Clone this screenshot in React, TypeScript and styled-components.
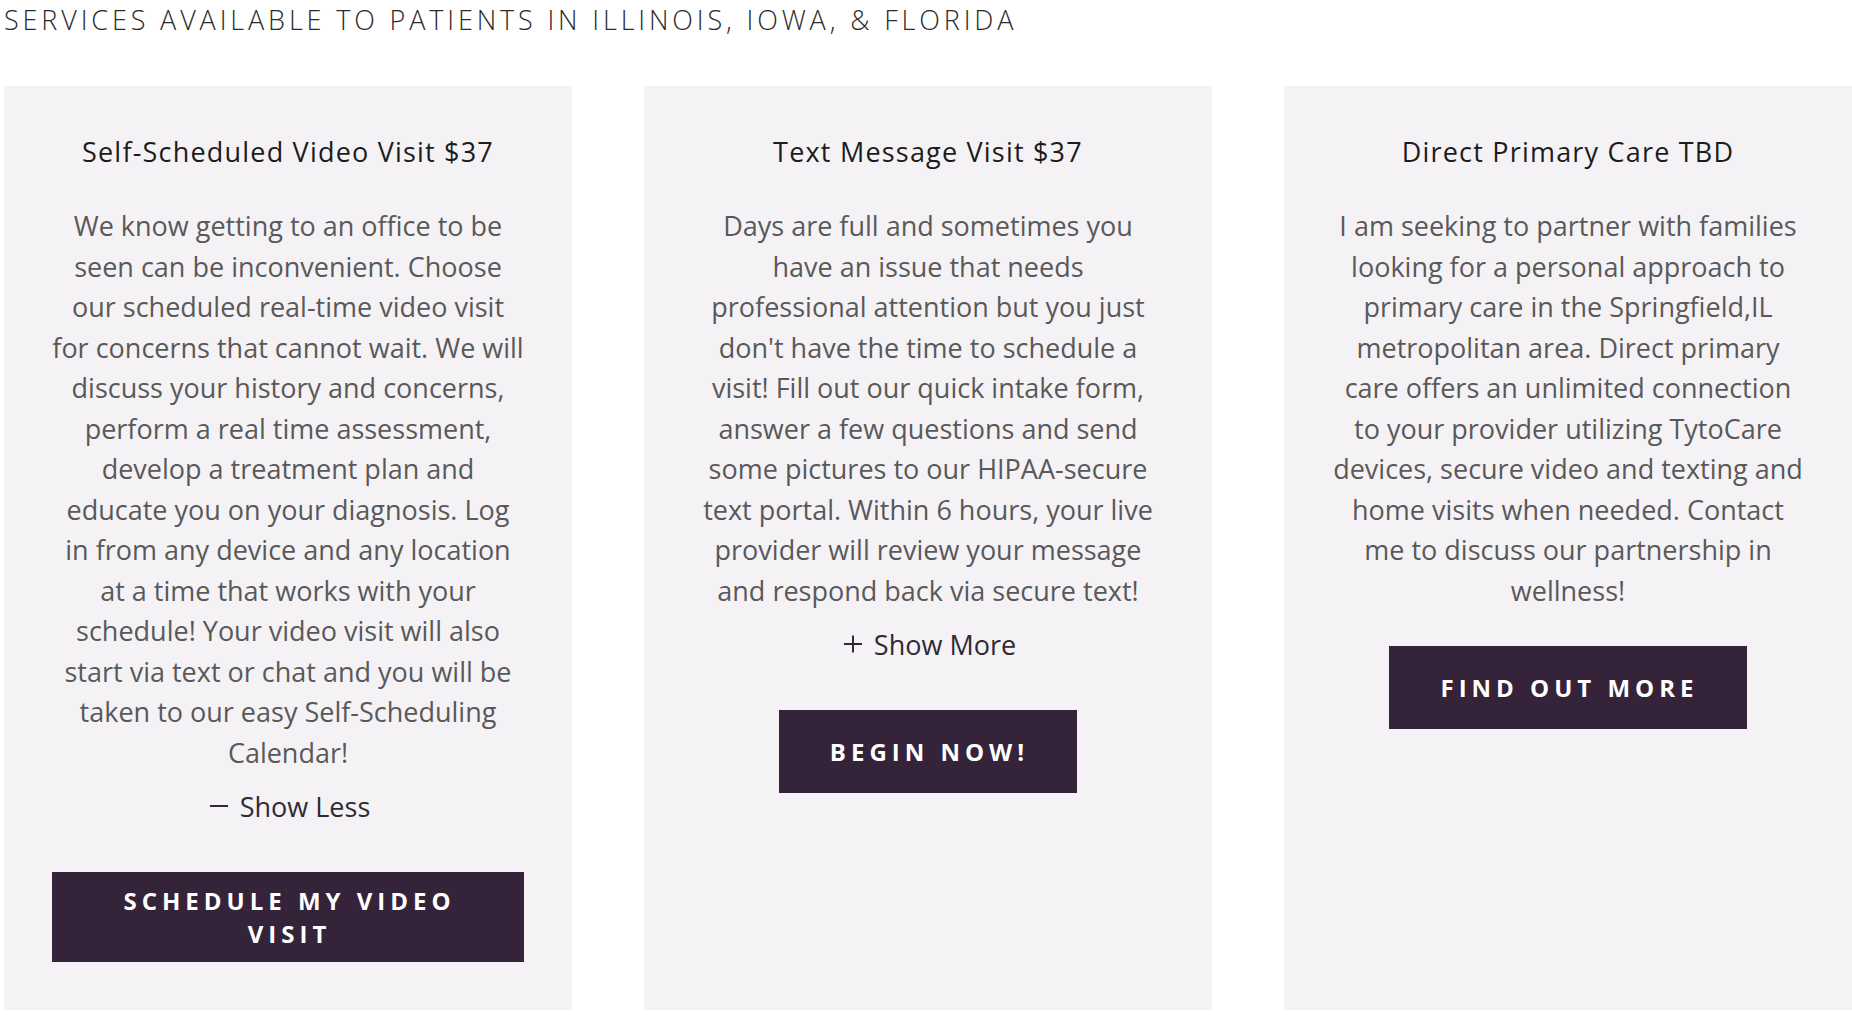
import React, { useState } from 'react'
import styled, { createGlobalStyle } from 'styled-components'

const GlobalStyle = createGlobalStyle`
  html, body {
    margin: 0;
    padding: 0;
    background: #ffffff;
  }
  body {
    font-family: "Open Sans", "Liberation Sans", sans-serif;
  }
`

const Page = styled.div`
  padding: 2px 0 5px 4px;
  width: 1852px;
  box-sizing: border-box;
`

const Heading = styled.h2`
  margin: 0 0 48px;
  font-size: 27px;
  line-height: 36px;
  font-weight: 300;
  letter-spacing: 3.85px;
  text-transform: uppercase;
  color: #2b2b2b;
`

const Grid = styled.div`
  display: grid;
  grid-template-columns: repeat(3, 1fr);
  gap: 72px;
`

const Card = styled.div`
  background: #f5f2f6;
  padding: 48px 44px;
  display: flex;
  flex-direction: column;
  align-items: center;
  text-align: center;
`

const Title = styled.h3`
  margin: 0 0 36px;
  font-size: 27px;
  line-height: 36px;
  font-weight: 400;
  letter-spacing: 1.2px;
  color: #1c1c1c;
`

const Body = styled.p`
  margin: 0;
  font-size: 27px;
  line-height: 40.5px;
  color: #595959;
`

const Line = styled.span`
  display: block;
  white-space: nowrap;
`

const Toggle = styled.button`
  margin: 13px 0 11px;
  padding: 0 0 0 4px;
  border: 0;
  background: none;
  display: inline-flex;
  align-items: center;
  gap: 12px;
  height: 40px;
  font-family: inherit;
  font-size: 27px;
  color: #2f2a33;
  cursor: pointer;
`

const Actions = styled.div`
  margin-top: 35px;
  width: 100%;
  display: flex;
  justify-content: center;
`

const CtaButton = styled.a`
  display: inline-flex;
  align-items: center;
  justify-content: center;
  box-sizing: border-box;
  max-width: 472px;
  min-height: 83px;
  padding: 12px 48px 12px 51px;
  background: #352339;
  color: #ffffff;
  font-size: 24px;
  line-height: 33px;
  font-weight: 700;
  letter-spacing: 5px;
  text-transform: uppercase;
  text-decoration: none;
  text-align: center;
  cursor: pointer;
`

const ToggleIcon = ({ open }: { open: boolean }) => (
  <svg width="18" height="18" viewBox="0 0 18 18" fill="none" stroke="currentColor" strokeWidth="2">
    <line x1="0" y1="9" x2="18" y2="9" />
    {!open && <line x1="9" y1="0.5" x2="9" y2="17.5" />}
  </svg>
)

interface Service {
  title: string
  lines: string[]
  cta: string
  toggle?: boolean
  open?: boolean
}

const services: Service[] = [
  {
    title: 'Self-Scheduled Video Visit $37',
    lines: [
      'We know getting to an office to be',
      'seen can be inconvenient. Choose',
      'our scheduled real-time video visit',
      'for concerns that cannot wait. We will',
      'discuss your history and concerns,',
      'perform a real time assessment,',
      'develop a treatment plan and',
      'educate you on your diagnosis. Log',
      'in from any device and any location',
      'at a time that works with your',
      'schedule! Your video visit will also',
      'start via text or chat and you will be',
      'taken to our easy Self-Scheduling',
      'Calendar!',
    ],
    cta: 'Schedule my video visit',
    toggle: true,
    open: true,
  },
  {
    title: 'Text Message Visit $37',
    lines: [
      'Days are full and sometimes you',
      'have an issue that needs',
      'professional attention but you just',
      "don't have the time to schedule a",
      'visit! Fill out our quick intake form,',
      'answer a few questions and send',
      'some pictures to our HIPAA-secure',
      'text portal. Within 6 hours, your live',
      'provider will review your message',
      'and respond back via secure text!',
    ],
    cta: 'Begin now!',
    toggle: true,
    open: false,
  },
  {
    title: 'Direct Primary Care TBD',
    lines: [
      'I am seeking to partner with families',
      'looking for a personal approach to',
      'primary care in the Springfield,IL',
      'metropolitan area. Direct primary',
      'care offers an unlimited connection',
      'to your provider utilizing TytoCare',
      'devices, secure video and texting and',
      'home visits when needed. Contact',
      'me to discuss our partnership in',
      'wellness!',
    ],
    cta: 'Find out more',
  },
]

const ServiceCard = ({ title, lines, cta, toggle, open }: Service) => {
  const [isOpen, setIsOpen] = useState(!!open)
  return (
    <Card>
      <Title>{title}</Title>
      <Body>
        {lines.map((l, i) => (
          <Line key={i}>{l}</Line>
        ))}
      </Body>
      {toggle && (
        <Toggle onClick={() => setIsOpen(!isOpen)}>
          <ToggleIcon open={isOpen} />
          {isOpen ? 'Show Less' : 'Show More'}
        </Toggle>
      )}
      <Actions>
        <CtaButton>{cta}</CtaButton>
      </Actions>
    </Card>
  )
}

export default function App() {
  return (
    <>
      <GlobalStyle />
      <Page>
        <Heading>Services available to patients in Illinois, Iowa, &amp; Florida</Heading>
        <Grid>
          {services.map((s) => (
            <ServiceCard key={s.title} {...s} />
          ))}
        </Grid>
      </Page>
    </>
  )
}
